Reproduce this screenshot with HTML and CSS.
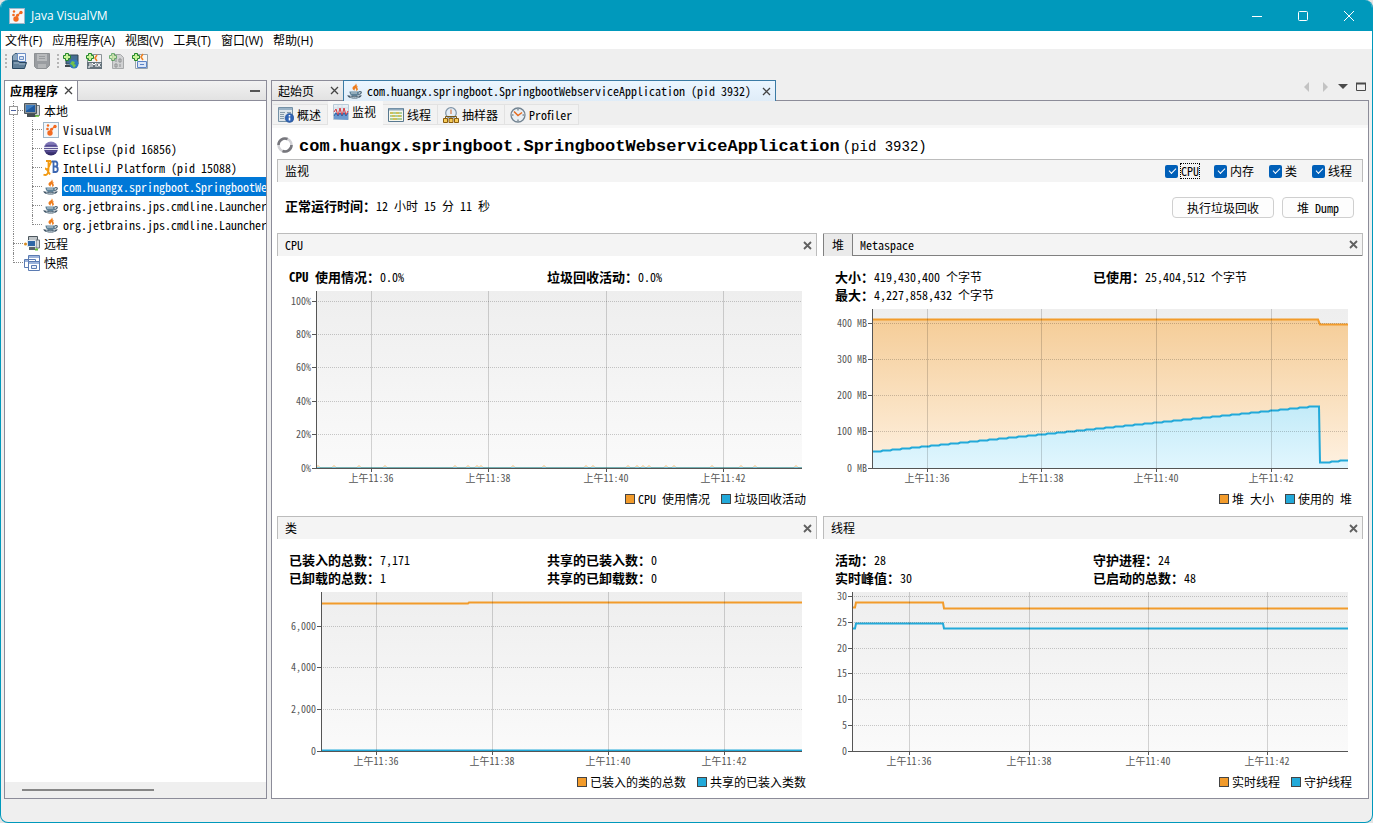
FILE: index.html
```html
<!DOCTYPE html>
<html lang="zh-CN">
<head>
    <meta charset="UTF-8">
    <meta name="viewport" content="width=device-width, initial-scale=1.0">
    <title>Java VisualVM</title>
    <link rel="stylesheet" href="styles.css">
</head>
<body>
    <!-- icon sprite -->
    <svg class="sprite" aria-hidden="true">
        <defs>
            <linearGradient id="heapOrange" x1="0" y1="0" x2="0" y2="1">
                <stop offset="0" stop-color="#f5cd98"/><stop offset="1" stop-color="#fef1e1"/>
            </linearGradient>
            <linearGradient id="heapBlue" x1="0" y1="0" x2="0" y2="1">
                <stop offset="0" stop-color="#c3ebf8"/><stop offset="1" stop-color="#e1f6fe"/>
            </linearGradient>
            <linearGradient id="sphere" x1="0" y1="0" x2="0" y2="1">
                <stop offset="0" stop-color="#8c84c4"/><stop offset="1" stop-color="#2b2261"/>
            </linearGradient>
        </defs>
        <symbol id="i-vvm" viewBox="0 0 16 16">
            <rect x=".5" y=".5" width="15" height="15" fill="#f3f7fa" stroke="#9db6c9"/>
            <path d="M8 7.500l4-3M8 8l-1 3" stroke="#f26a21" stroke-width="1.200" fill="none"/>
            <circle cx="5" cy="3.500" r="1.200" fill="#f26a21"/><circle cx="4.500" cy="7" r="1.300" fill="#f26a21"/>
            <circle cx="12" cy="4.500" r="1.700" fill="#f26a21"/><circle cx="7" cy="11" r="2.700" fill="#f26a21"/>
            <circle cx="8.500" cy="7.300" r="1.500" fill="#f26a21"/>
        </symbol>
        <symbol id="i-java" viewBox="0 0 16 16">
            <path d="M8.800 0c1 2.500-3.800 3-3.300 5.500.3 1.200 1.200 1.700 2 2.300C7.200 5.700 10 4.500 9.800 2.500 9.700 1.500 9.300.8 8.800 0zM11 2.800c-2 1-3 2.200-2 3.400.6.700.2 1.200-.2 1.800 2.200-.8 2.600-1.800 1.700-2.800-.5-.8-.2-1.500.5-2.400z" fill="#ee7d1c"/>
            <path d="M2.500 8.500h9.500c.2 2-1 4.500-2.500 4.500h-4C4 13 2.300 10.500 2.500 8.500z" fill="#5f8197"/>
            <path d="M4 10h6" stroke="#c8d7e0"/>
            <path d="M12 8.800c3.200-.8 3.200 2.200-.8 2.900" fill="none" stroke="#4b6475" stroke-width="1.200"/>
            <path d="M.5 12c3 1.500 11 1.500 14 0 .5 4.500-14.500 5-14 0z" fill="#45596a"/>
            <path d="M3 13.800c3 .8 6 .8 9 0" stroke="#b9c9d3" fill="none"/>
        </symbol>
        <symbol id="i-eclipse" viewBox="0 0 16 16">
            <circle cx="8" cy="7.500" r="7" fill="url(#sphere)"/>
            <path d="M1 6.500h14M1 8.500h14" stroke="#e3e2f1"/>
            <path d="M3 4.500h10M3 10.500h10" stroke="#554a94"/>
        </symbol>
        <symbol id="i-idea" viewBox="0 0 16 16">
            <path d="M3 1h5M5.500 1v9c0 4-2.500 6-5 4.500M2 8.500c2 0 3 3 5 6M8.500 1L4 11" fill="none" stroke="#f29a12" stroke-width="1.800"/>
            <path d="M10.500 1v11h2c3 0 3-5.500 0-5.500h-2h2C15 6.500 15 1.500 12.500 1.500H8.500" fill="none" stroke="#3c66b1" stroke-width="1.800"/>
        </symbol>
        <symbol id="i-pc" viewBox="0 0 16 16">
            <path d="M6 2.500h9.500v10H6z" fill="#cfd3d6" stroke="#6a7278"/>
            <path d="M.5.5h12v10H.5z" fill="#8a9298" stroke="#4c565d"/>
            <path d="M2 2h9v7H2z" fill="#1f5a9e"/><path d="M2 2h9L2 8z" fill="#3f7fc2"/>
            <path d="M3 11h8l1 3H3z" fill="#454e54"/><path d="M11 13h4" stroke="#63bd32" stroke-width="1.500"/>
        </symbol>
        <symbol id="i-remote" viewBox="0 0 16 16">
            <path d="M4.500.5h9v8h-9z" fill="#bfc5c9" stroke="#4c565d"/>
            <path d="M12 4h3.500v8H12z" fill="#d6dadd" stroke="#69737a"/>
            <path d="M3.500 4.500h8v6h-8z" fill="#2f67a7" stroke="#e2e6e9"/>
            <path d="M5 11h6v3H5z" fill="#59636a"/><path d="M11 13.500h3" stroke="#63bd32" stroke-width="2"/>
            <circle cx="1.500" cy="8" r="1.500" fill="#d58a1f"/>
        </symbol>
        <symbol id="i-snap" viewBox="0 0 16 16">
            <g fill="#fff" stroke="#5b7bb2"><path d="M4.500.5h11v8h-11zM.5 4.500h11v8H.5z"/><path d="M4.500 6.500h11v9h-11z"/></g>
            <path d="M5 2h10M1 6h3M5 8h10" stroke="#9db4db" stroke-width="2"/>
            <path d="M7.500 10.500h5v3h-5z" fill="#e9eef8" stroke="#5b7bb2"/>
        </symbol>
        <symbol id="i-open" viewBox="0 0 16 16">
            <path d="M1.500 3L4 .5h3V8H1.500z" fill="#8ba6bd" stroke="#415f78"/>
            <path d="M6.500.5h8v8h-8z" fill="#f5f8fc" stroke="#6d8fc4"/><path d="M8.500 3.500h4v3h-4z" fill="#d6e2f3" stroke="#6d8fc4"/>
            <path d="M1.500 15.500V8h6l1 1.500h7l-2 6z" fill="#607f98" stroke="#27455e"/><path d="M3 10h5M8 11h6" stroke="#a2b8ca"/>
        </symbol>
        <symbol id="i-save" viewBox="0 0 16 16">
            <path d="M.5.5h15v12l-3 3h-10l-2-2z" fill="#999ca0" stroke="#8d9093"/>
            <path d="M3 1h10v7H3z" fill="#b9bbbd"/><path d="M5 3.500h6M5 5.500h6" stroke="#999c9f"/><path d="M4 11h8v4H4z" fill="#b3b5b7"/>
        </symbol>
        <symbol id="i-plus" viewBox="0 0 8 8">
            <path d="M2.500.5h3v2h2v3h-2v2h-3v-2h-2v-3h2z" fill="#c9f39b" stroke="#23862a"/>
        </symbol>
        <symbol id="i-addhost" viewBox="0 0 16 16">
            <path d="M3 2h12v9H3z" fill="#456e94" stroke="#314553"/><path d="M2 13h8" stroke="#3e474d" stroke-width="2"/>
            <circle cx="11" cy="11" r="4.500" fill="#2e7abd"/><path d="M9 8l3 1-1 2 2 1-2 3-2-3-2-1z" fill="#72c14b"/>
            <use href="#i-plus" width="8" height="8"/>
        </symbol>
        <symbol id="i-addjmx" viewBox="0 0 16 16">
            <path d="M4.500 1.500h11v14h-14V6" fill="#f2f2f2" stroke="#8b9297"/>
            <path d="M11 2L9 5l2 3" stroke="#ee8122" stroke-width="1.500" fill="none"/>
            <path d="M1 9h15v7H1z" fill="#65737c"/>
            <path d="M4 10v4H2M6 14v-4l2 2 2-2v4M11.500 10l3 4M14.500 10l-3 4" stroke="#fff" fill="none"/>
            <use href="#i-plus" width="8" height="8"/>
        </symbol>
        <symbol id="i-addcore" viewBox="0 0 16 16">
            <path d="M3.500 1.500h8l3 3v11h-11z" fill="#d0d1d2" stroke="#a7a9aa"/>
            <path d="M7 6v3M10 6h2v3h-2zM6 11h2v3H6zM11 11v3" stroke="#8f9193" fill="none"/>
            <g opacity=".6"><use href="#i-plus" width="8" height="8"/></g>
        </symbol>
        <symbol id="i-addsnap" viewBox="0 0 16 16">
            <path d="M3.500 1.500h12v14h-12z" fill="#f7f7f4" stroke="#97a3ac"/>
            <path d="M11 1L9 4l2 3" stroke="#ee8122" stroke-width="1.500" fill="none"/>
            <path d="M5.500 8.500h9v6h-9z" fill="#dbe6f7" stroke="#5b83c6"/><path d="M8 11.500h4" stroke="#5b83c6"/>
            <use href="#i-plus" width="8" height="8"/>
        </symbol>
        <symbol id="i-overview" viewBox="0 0 16 16">
            <path d="M.5.5h14v14H.5z" fill="#dfe6eb" stroke="#7591a6"/><path d="M1 2h13" stroke="#9ab3c6" stroke-width="2"/>
            <path d="M2 5.500h5M2 7.500h4M2 9.500h4M2 11.500h4M9 5.500h4" stroke="#8599a8"/>
            <circle cx="11.500" cy="11" r="4.400" fill="#2f63b5" stroke="#1d4a92" stroke-width=".6"/>
            <path d="M11.500 8v1.500M11.500 10.500v3" stroke="#fff" stroke-width="1.600"/>
        </symbol>
        <symbol id="i-monitor" viewBox="0 0 16 16">
            <path d="M.5.5h15v15H.5z" fill="#e8eff5" stroke="#b9cad7"/>
            <path d="M1 4h14M1 7h14M5 1v14M9 1v14" stroke="#c2d1dd" stroke-width=".6"/>
            <path d="M1 15V10l2-2 2 4 2-4 2 4 2-5 2 4 2-2v7z" fill="#6c9bd0"/>
            <path d="M1 8l2-3 2 7 2-8 2 8 2-8 2 7 2-4" fill="none" stroke="#d9343b"/>
            <path d="M1 12l2-3 2 3 2-3 2 3 2-3 2 3 2-3" fill="none" stroke="#2d67ab"/>
        </symbol>
        <symbol id="i-threads" viewBox="0 0 16 16">
            <path d="M.5 1.500h15v13H.5z" fill="#f7f8ee" stroke="#58788f"/><path d="M1 2.500h14" stroke="#8fa9bc" stroke-width="2"/>
            <path d="M2 6h12M2 9h12M2 12h12" stroke="#63a348" stroke-width="1.200"/>
            <path d="M2 6h3M8 6h3M4 9h3M10 9h3M5 12h4" stroke="#efb41d" stroke-width="1.200"/>
        </symbol>
        <symbol id="i-sampler" viewBox="0 0 16 16">
            <circle cx="8" cy="6" r="5.300" fill="#e4edf6" stroke="#7f93a5" stroke-width="1.200"/>
            <path d="M8 2.500V7" stroke="#d86828" fill="none"/>
            <path d="M2.500 11.500V9.500h11v2M8 9v3" stroke="#77591b" fill="none"/>
            <path d="M.5 11.500h4v4h-4zM6 11.500h4v4H6zM11.500 11.500h4v4h-4z" fill="#f7cb58" stroke="#8a5d0d"/>
        </symbol>
        <symbol id="i-profiler" viewBox="0 0 16 16">
            <circle cx="8" cy="8" r="7" fill="#e9eff4" stroke="#728391" stroke-width="1.300"/>
            <path d="M8 2v1.500M8 12.500V14M2 8h1.500M12.500 8H14" stroke="#4c5d69"/>
            <path d="M4 4.500L8 8.500l4-3" stroke="#e66a1f" stroke-width="1.500" fill="none"/>
        </symbol>
        <symbol id="i-x" viewBox="0 0 9 9"><path d="M1 1l7 7M8 1L1 8" stroke="currentColor" stroke-width="1.300"/></symbol>
        <symbol id="i-xb" viewBox="0 0 9 9"><path d="M1 1l7 7M8 1L1 8" stroke="currentColor" stroke-width="1.800"/></symbol>
    </svg>

    <div class="window">
        <header class="titlebar">
            <svg class="icon"><use href="#i-vvm"/></svg>
            <span class="title">Java VisualVM</span>
            <div class="win-buttons">
                <button type="button" aria-label="最小化"><svg width="10" height="10"><path d="M0 5.500h10" stroke="#fff"/></svg></button>
                <button type="button" aria-label="最大化"><svg width="10" height="10"><rect x=".5" y=".5" width="9" height="9" rx="1" fill="none" stroke="#fff"/></svg></button>
                <button type="button" aria-label="关闭"><svg width="10" height="10"><path d="M0 0l10 10M10 0L0 10" stroke="#fff"/></svg></button>
            </div>
        </header>

        <nav class="menubar">
            <button type="button">文件(F)</button>
            <button type="button">应用程序(A)</button>
            <button type="button">视图(V)</button>
            <button type="button">工具(T)</button>
            <button type="button">窗口(W)</button>
            <button type="button">帮助(H)</button>
        </nav>

        <div class="toolbar">
            <span class="grip"></span>
            <button type="button" aria-label="打开"><svg class="icon"><use href="#i-open"/></svg></button>
            <button type="button" aria-label="保存"><svg class="icon"><use href="#i-save"/></svg></button>
            <span class="grip"></span>
            <button type="button" aria-label="添加远程主机"><svg class="icon"><use href="#i-addhost"/></svg></button>
            <button type="button" aria-label="添加 JMX 连接"><svg class="icon"><use href="#i-addjmx"/></svg></button>
            <button type="button" aria-label="添加核心 Dump"><svg class="icon"><use href="#i-addcore"/></svg></button>
            <button type="button" aria-label="添加快照"><svg class="icon"><use href="#i-addsnap"/></svg></button>
        </div>

        <div class="workspace">
            <!-- Applications tree -->
            <aside class="sidebar">
                <div class="side-head">
                    <div class="side-tab">应用程序 <button type="button" class="close" aria-label="关闭"><svg><use href="#i-x"/></svg></button></div>
                    <button type="button" class="minimize" aria-label="最小化"></button>
                </div>
                <ul class="tree">
                    <li>
                        <div class="node"><span class="toggle"></span><svg class="icon"><use href="#i-pc"/></svg><span class="name">本地</span></div>
                        <ul>
                            <li><div class="node"><svg class="icon"><use href="#i-vvm"/></svg><span class="name">VisualVM</span></div></li>
                            <li><div class="node"><svg class="icon"><use href="#i-eclipse"/></svg><span class="name">Eclipse (pid 16856)</span></div></li>
                            <li><div class="node"><svg class="icon"><use href="#i-idea"/></svg><span class="name">IntelliJ Platform (pid 15088)</span></div></li>
                            <li><div class="node selected"><svg class="icon"><use href="#i-java"/></svg><span class="name">com.huangx.springboot.SpringbootWebserviceApplication (pid 3932)</span></div></li>
                            <li><div class="node"><svg class="icon"><use href="#i-java"/></svg><span class="name">org.jetbrains.jps.cmdline.Launcher</span></div></li>
                            <li><div class="node"><svg class="icon"><use href="#i-java"/></svg><span class="name">org.jetbrains.jps.cmdline.Launcher</span></div></li>
                        </ul>
                    </li>
                    <li><div class="node"><svg class="icon"><use href="#i-remote"/></svg><span class="name">远程</span></div></li>
                    <li><div class="node"><svg class="icon"><use href="#i-snap"/></svg><span class="name">快照</span></div></li>
                </ul>
                <div class="hscroll"><div class="thumb"></div></div>
            </aside>

            <main class="editor">
                <div class="doc-tabs">
                    <div class="doc-tab first">起始页 <button type="button" class="close" aria-label="关闭"><svg><use href="#i-x"/></svg></button></div>
                    <div class="doc-tab active"><svg class="icon"><use href="#i-java"/></svg><span>com.huangx.springboot.SpringbootWebserviceApplication (pid 3932)</span> <button type="button" class="close" aria-label="关闭"><svg><use href="#i-x"/></svg></button></div>
                    <div class="tab-tools">
                        <button type="button" aria-label="向左"><svg width="10" height="10"><path d="M7 0v10L2 5z" fill="#c3c3c3"/></svg></button>
                        <button type="button" aria-label="向右"><svg width="10" height="10"><path d="M3 0v10l5-5z" fill="#c3c3c3"/></svg></button>
                        <button type="button" aria-label="列表"><svg width="10" height="10"><path d="M0 2h10L5 7z" fill="#4a4a4a"/></svg></button>
                        <button type="button" aria-label="最大化"><svg width="10" height="10"><path d="M.5 1.500h9v7h-9z" fill="none" stroke="#4a4a4a"/><path d="M0 1.500h10" stroke="#4a4a4a" stroke-width="2"/></svg></button>
                    </div>
                </div>

                <div class="document">
                    <div class="view-tabs">
                        <button type="button"><svg class="icon"><use href="#i-overview"/></svg>概述</button>
                        <button type="button" class="active"><svg class="icon"><use href="#i-monitor"/></svg>监视</button>
                        <button type="button"><svg class="icon"><use href="#i-threads"/></svg>线程</button>
                        <button type="button"><svg class="icon"><use href="#i-sampler"/></svg>抽样器</button>
                        <button type="button"><svg class="icon"><use href="#i-profiler"/></svg>Profiler</button>
                    </div>

                    <div class="view">
                        <h1>
                            <svg class="spinner" viewBox="0 0 16 16"><circle cx="8" cy="8" r="6.500" fill="none" stroke="#d2d2d6" stroke-width="2.500"/><path d="M1.500 8a6.500 6.500 0 0 1 9-6M14.500 8a6.500 6.500 0 0 1-9 6" fill="none" stroke="#77777d" stroke-width="2.500"/></svg>
                            <span class="app-name">com.huangx.springboot.SpringbootWebserviceApplication</span><span class="pid">(pid 3932)</span>
                        </h1>

                        <div class="band">
                            <span>监视</span>
                            <div class="checks">
                                <label class="focused"><input type="checkbox" checked><span>CPU</span></label>
                                <label><input type="checkbox" checked><span>内存</span></label>
                                <label><input type="checkbox" checked><span>类</span></label>
                                <label><input type="checkbox" checked><span>线程</span></label>
                            </div>
                        </div>

                        <div class="uptime">
                            <div class="uptime-text"><b>正常运行时间：</b>12 小时 15 分 11 秒</div>
                            <div class="actions">
                                <button type="button">执行垃圾回收</button>
                                <button type="button">堆 Dump</button>
                            </div>
                        </div>

                        <div class="panels">
                            <section class="panel">
                                <div class="panel-head"><span>CPU</span><button type="button" class="close" aria-label="关闭"><svg><use href="#i-xb"/></svg></button></div>
                                <div class="stats">
                                    <div><b>CPU 使用情况：</b>0.0%</div>
                                    <div><b>垃圾回收活动：</b>0.0%</div>
                                </div>
                                <div class="plot plot-cpu"><svg id="chart-cpu"></svg></div>
                                <div class="legend"><span class="key orange"></span>CPU 使用情况<span class="key blue"></span>垃圾回收活动</div>
                            </section>

                            <section class="panel">
                                <div class="panel-head tabbed"><button type="button" class="mem-tab">堆</button><button type="button" class="mem-tab other">Metaspace</button><button type="button" class="close" aria-label="关闭"><svg><use href="#i-xb"/></svg></button></div>
                                <div class="stats">
                                    <div><b>大小：</b>419,430,400 个字节</div>
                                    <div><b>已使用：</b>25,404,512 个字节</div>
                                    <div><b>最大：</b>4,227,858,432 个字节</div>
                                </div>
                                <div class="plot plot-heap"><svg id="chart-heap"></svg></div>
                                <div class="legend"><span class="key orange"></span>堆 大小<span class="key blue"></span>使用的 堆</div>
                            </section>

                            <section class="panel">
                                <div class="panel-head"><span>类</span><button type="button" class="close" aria-label="关闭"><svg><use href="#i-xb"/></svg></button></div>
                                <div class="stats">
                                    <div><b>已装入的总数：</b>7,171</div>
                                    <div><b>共享的已装入数：</b>0</div>
                                    <div><b>已卸载的总数：</b>1</div>
                                    <div><b>共享的已卸载数：</b>0</div>
                                </div>
                                <div class="plot plot-classes"><svg id="chart-classes"></svg></div>
                                <div class="legend"><span class="key orange"></span>已装入的类的总数<span class="key blue"></span>共享的已装入类数</div>
                            </section>

                            <section class="panel">
                                <div class="panel-head"><span>线程</span><button type="button" class="close" aria-label="关闭"><svg><use href="#i-xb"/></svg></button></div>
                                <div class="stats">
                                    <div><b>活动：</b>28</div>
                                    <div><b>守护进程：</b>24</div>
                                    <div><b>实时峰值：</b>30</div>
                                    <div><b>已启动的总数：</b>48</div>
                                </div>
                                <div class="plot plot-threads"><svg id="chart-threads"></svg></div>
                                <div class="legend"><span class="key orange"></span>实时线程<span class="key blue"></span>守护线程</div>
                            </section>
                        </div>
                    </div>
                </div>
            </main>
        </div>
    </div>
    <script src="charts.js"></script>
</body>
</html>
```
FILE: styles.css
```css
* {
    box-sizing: border-box;
}
body {
    margin: 0;
    background-color: #e4e4e4;
    color: #000;
    font-family: "Noto Sans CJK SC", sans-serif;
    font-size: 12px;
    line-height: 18px;
    font-feature-settings: "hwid";
}
button {
    margin: 0;
    padding: 0;
    border: none;
    background: none;
    color: inherit;
    font: inherit;
    font-feature-settings: inherit;
}
.sprite {
    position: absolute;
    width: 0;
    height: 0;
}
.icon {
    width: 16px;
    height: 16px;
    flex: none;
}
.close {
    display: flex;
    color: #444;
}
.close svg {
    width: 9px;
    height: 9px;
}

/* Window frame */
.window {
    display: flex;
    flex-direction: column;
    height: 100vh;
    min-height: 600px;
    border: 1px solid #0099bc;
    border-top: none;
    border-radius: 8px;
    overflow: hidden;
    background-color: #efefef;
}
.titlebar {
    display: flex;
    align-items: center;
    flex: none;
    height: 31px;
    padding-left: 8px;
    background-color: #0099bc;
    color: #fff;
}
.title {
    margin-left: 6px;
    font-family: "Open Sans", sans-serif;
    font-feature-settings: normal;
}
.win-buttons {
    display: flex;
    margin-left: auto;
}
.win-buttons button {
    display: flex;
    align-items: center;
    justify-content: center;
    width: 46px;
    height: 31px;
}
.menubar {
    display: flex;
    flex: none;
    gap: 10px;
    height: 18px;
    padding: 1px 0 0 4px;
    background-color: #fff;
    font-family: "Open Sans", "Noto Sans CJK SC", sans-serif;
    font-feature-settings: normal;
}
.toolbar {
    display: flex;
    flex: none;
    align-items: center;
    height: 31px;
    padding: 0 0 7px 4px;
    gap: 7px;
}
.toolbar button {
    display: flex;
}
.grip {
    width: 2px;
    height: 14px;
    margin-right: -3px;
    background: repeating-linear-gradient(#b5b5b5 0 2px, transparent 2px 4px);
}

/* Left side */
.workspace {
    display: flex;
    flex: 1;
    min-height: 0;
    gap: 4px;
    padding: 0 3px 23px;
}
.sidebar {
    display: flex;
    flex-direction: column;
    flex: none;
    width: 263px;
    border: 1px solid #8c8c99;
    background-color: #fff;
}
.side-head {
    display: flex;
    align-items: center;
    justify-content: space-between;
    height: 20px;
    border-bottom: 1px solid #8c8c99;
    background: linear-gradient(#f2f2f2, #e2e2e2);
}
.side-tab {
    display: flex;
    align-items: center;
    gap: 6px;
    height: 20px;
    padding: 0 4px 0 5px;
    border-right: 1px solid #8c8c99;
    background-color: #fff;
    font-weight: bold;
}
.minimize {
    width: 10px;
    height: 2px;
    margin-right: 6px;
    background-color: #555;
}
.tree {
    flex: 1;
    overflow: hidden;
}
.tree,
.tree ul {
    margin: 0;
    padding: 0;
    list-style: none;
}
.tree ul {
    padding-left: 19px;
}
.tree li {
    position: relative;
}
.node {
    display: flex;
    align-items: center;
    gap: 3px;
    height: 19px;
    padding-left: 19px;
    white-space: nowrap;
}
.name {
    flex: 1;
    height: 19px;
    padding-left: 1px;
    line-height: 20px;
}
.selected .name {
    background-color: #0078d7;
    color: #fff;
}
/* dotted guides of the tree */
.tree li::before,
.tree li::after {
    content: "";
    position: absolute;
    left: 8px;
}
.tree li::before {
    top: 9px;
    width: 10px;
    border-top: 1px dotted #888;
}
.tree li::after {
    top: 0;
    height: 100%;
    border-left: 1px dotted #888;
}
.tree li:last-child::after {
    height: 10px;
}
.toggle {
    position: absolute;
    left: 4px;
    top: 5px;
    z-index: 1;
    width: 9px;
    height: 9px;
    border: 1px solid #999;
    background: linear-gradient(#4a5f9f, #4a5f9f) center / 5px 1px no-repeat #fff;
}
.hscroll {
    height: 16px;
    padding: 7px 17px;
    background-color: #efefef;
}
.thumb {
    width: 58%;
    height: 2px;
    background-color: #868686;
}

/* Documents */
.editor {
    display: flex;
    flex-direction: column;
    flex: 1;
    min-width: 0;
}
.doc-tabs {
    display: flex;
    flex: none;
    height: 21px;
    position: relative;
}
.doc-tab {
    display: flex;
    align-items: center;
    justify-content: space-between;
    height: 20px;
    padding: 0 4px 0 6px;
    border: 1px solid #8c8c99;
    border-bottom: none;
    background: linear-gradient(#f2f2f2, #e2e2e2);
}
.doc-tab.first {
    width: 72px;
    border-right: none;
}
.doc-tab.active {
    gap: 4px;
    height: 21px;
    padding: 0 4px 0 3px;
    border-color: #3b7ba5;
    background: linear-gradient(#ecf6ff, #dfecf8);
}
.active .close {
    margin-left: 7px;
}
.tab-tools {
    display: flex;
    align-items: center;
    gap: 8px;
    margin: 0 3px 8px auto;
}
.tab-tools button {
    display: flex;
}
.document {
    display: flex;
    flex-direction: column;
    flex: 1;
    min-height: 0;
    margin-top: -1px;
    border: 1px solid #8c8c99;
    background-color: #fff;
}
.view-tabs {
    display: flex;
    flex: none;
    align-items: flex-end;
    height: 27px;
    padding-left: 1px;
    border-bottom: 3px solid #f8f8f8;
    background-color: #efefef;
}
.view-tabs button {
    display: flex;
    align-items: center;
    gap: 3px;
    height: 21px;
    padding: 0 6px 0 5px;
    border: 1px solid #e2e2e2;
    border-left: none;
    background-color: #f2f2f2;
}
.view-tabs .active {
    height: 24px;
    padding: 0 6px 2px 5px;
    border-color: #f8f8f8;
    background-color: #f8f8f8;
}
.view {
    display: flex;
    flex-direction: column;
    flex: 1;
    min-height: 0;
    padding: 0 5px;
}
h1 {
    display: flex;
    align-items: center;
    flex: none;
    height: 31px;
    margin: 0;
    padding-top: 6px;
    font-family: "Liberation Mono", monospace;
    font-size: 17px;
    font-weight: normal;
}
.spinner {
    width: 16px;
    height: 16px;
    margin: 0 6px 4px 0;
}
.app-name {
    font-weight: bold;
}
.pid {
    margin-left: 3px;
    font-size: 14px;
}
.band {
    display: flex;
    align-items: center;
    justify-content: space-between;
    flex: none;
    height: 23px;
    padding: 0 10px 0 7px;
    border: 1px solid #bcbcbc;
    border-bottom: none;
    background-color: #f4f4f4;
}
.checks {
    display: flex;
    gap: 15px;
}
.checks label {
    display: flex;
    align-items: center;
    gap: 3px;
}
.checks input {
    position: relative;
    appearance: none;
    width: 13px;
    height: 13px;
    margin: 0;
    border-radius: 2px;
    background-color: #005fb8;
}
.checks input:checked::after {
    content: "";
    position: absolute;
    left: 4px;
    top: 3px;
    width: 6px;
    height: 3px;
    border: solid #fff;
    border-width: 0 0 1px 1px;
    transform: rotate(-45deg);
}
.checks span {
    line-height: 14px;
}
.focused span {
    outline: 1px dotted #000;
}
.uptime {
    display: flex;
    align-items: center;
    justify-content: space-between;
    flex: none;
    height: 51px;
    padding: 0 9px 0 8px;
}
.uptime-text {
    padding-bottom: 4px;
}
b {
    font-size: 13px;
}
.actions {
    display: flex;
    gap: 8px;
}
.actions button {
    height: 21px;
    padding: 0 14px;
    border: 1px solid #cfcfcf;
    border-radius: 4px;
    background-color: #fdfdfd;
}

/* Chart panels */
.panels {
    display: grid;
    grid-template-columns: 1fr 1fr;
    grid-template-rows: 1fr 1fr;
    gap: 1px 6px;
    flex: 1;
    min-height: 0;
}
.panel {
    display: flex;
    flex-direction: column;
    min-width: 0;
    min-height: 0;
}
.panel-head {
    display: flex;
    align-items: center;
    flex: none;
    height: 23px;
    padding: 0 4px 0 7px;
    border: 1px solid #bcbcbc;
    border-bottom: none;
    background-color: #f4f4f4;
}
.panel-head .close {
    margin-left: auto;
    color: #606060;
}
.tabbed {
    padding-left: 0;
    border-left: none;
}
.mem-tab {
    align-self: stretch;
    width: 30px;
    border: 1px solid #808080;
    border-width: 0 1px;
    background-color: #eaeaea;
}
.mem-tab.other {
    flex: 1;
    width: auto;
    padding-left: 7px;
    border-width: 0 0 1px;
    background: none;
    text-align: left;
}
.tabbed .close {
    align-self: stretch;
    align-items: center;
    margin-right: -4px;
    padding-right: 4px;
    border-bottom: 1px solid #808080;
}
.stats {
    display: grid;
    grid-template-columns: 1fr 1fr;
    flex: none;
    padding: 12px 12px 5px;
}
.stats div {
    height: 18px;
    white-space: nowrap;
}
.plot {
    flex: 1;
    min-height: 0;
    margin: 0 15px 21px 39px;
    background: linear-gradient(#eeeeee, #fafafa);
}
.plot-heap {
    margin-left: 49px;
}
.plot-classes {
    margin-left: 44px;
}
.plot-threads {
    margin-left: 29px;
}
.plot > svg {
    display: block;
    width: 100%;
    height: 100%;
    overflow: visible;
}
.plot text {
    fill: #555;
    font-size: 10px;
}
.grid {
    stroke: #000;
    stroke-opacity: 0.16;
    shape-rendering: crispEdges;
}
.grid.dotted {
    stroke-dasharray: 1 1;
    stroke-opacity: 0.2;
}
.axis {
    stroke: #555;
    shape-rendering: crispEdges;
}
.line {
    fill: none;
    stroke-width: 2;
    vector-effect: non-scaling-stroke;
}
.line.orange {
    stroke: #f29b2b;
}
.line.blue {
    stroke: #22a9d9;
}
.line.faint {
    stroke-width: 1;
    stroke-opacity: 0.6;
}
.legend {
    display: flex;
    align-items: center;
    justify-content: flex-end;
    flex: none;
    height: 26px;
    padding: 0 11px 7px;
}
.key {
    width: 10px;
    height: 10px;
    margin: 0 3px 0 11px;
    border: 1px solid #444;
}
.key.orange {
    background-color: #f29b2b;
}
.key.blue {
    background-color: #22a9d9;
}
```
FILE: charts.js
```js
const NS = 'http://www.w3.org/2000/svg';

function add(parent, tag, attrs, text) {
    const el = document.createElementNS(NS, tag);
    for (const name in attrs) el.setAttribute(name, attrs[name]);
    if (text) el.textContent = text;
    parent.appendChild(el);
    return el;
}

// staircase of one unit steps between two points
function steps(x0, y0, x1, y1) {
    const n = Math.abs(Math.round(y1 - y0));
    const points = [[x0, y0]];
    for (let i = 1; i <= n; i++) {
        const x = x0 + (x1 - x0) * i / (n + 1);
        const y = y0 + (y1 - y0) * i / n;
        points.push([x - 1, y0 + (y1 - y0) * (i - 1) / n], [x + 1, y]);
    }
    points.push([x1, y1]);
    return points;
}

function spikes(xs, base) {
    let points = [[0, base]];
    xs.forEach(x => points.push([x - 2, base], [x, base - 2], [x + 2, base]));
    points.push([486, base]);
    return points;
}

const times = ['上午11:36', '上午11:38', '上午11:40', '上午11:42'];
const used = [...steps(0, 142.5, 446, 97.5), [447, 97.5], [448, 153.5], ...steps(450, 153.5, 476, 151.5)];
const size = [[0, 10.5], [446, 10.5], [448, 15.5], [476, 15.5]];

const charts = {
    cpu: {
        w: 486, h: 177, x: [55, 172, 290, 407],
        y: [[10, '100%'], [43, '80%'], [76, '60%'], [110, '40%'], [143, '20%'], [177, '0%']],
        lines: [
            { cls: 'orange faint', pts: spikes([2, 18, 43, 69, 139, 152, 161, 165, 197, 228, 270, 277, 312, 321, 327, 333, 350, 358, 396, 425, 439, 480], 176.5) },
            { cls: 'blue faint', pts: [[0, 176.5], [486, 176.5]] }
        ]
    },
    heap: {
        w: 476, h: 159, x: [55, 169, 284, 399],
        y: [[14, '400 MB'], [50, '300 MB'], [86, '200 MB'], [122, '100 MB'], [159, '0 MB']],
        lines: [
            { cls: 'orange', pts: size, fill: 'url(#heapOrange)' },
            { cls: 'blue', pts: used, fill: 'url(#heapBlue)' }
        ]
    },
    classes: {
        w: 481, h: 159, x: [55, 171, 287, 403],
        y: [[34, '6,000'], [75, '4,000'], [117, '2,000'], [159, '0']],
        lines: [
            { cls: 'orange', pts: [[0, 11.5], [147, 11.5], [148, 10.5], [481, 10.5]] },
            { cls: 'blue', pts: [[0, 158.5], [481, 158.5]] }
        ]
    },
    threads: {
        w: 496, h: 159, x: [57, 177, 296, 415],
        y: [[4, '30'], [30, '25'], [56, '20'], [81, '15'], [107, '10'], [133, '5'], [159, '0']],
        lines: [
            { cls: 'orange', pts: [[0, 15.5], [3, 15.5], [4, 10.5], [91, 10.5], [92, 16.5], [496, 16.5]] },
            { cls: 'blue', pts: [[0, 36.5], [3, 36.5], [4, 31.5], [91, 31.5], [92, 36.5], [496, 36.5]] }
        ]
    }
};

for (const name in charts) {
    const c = charts[name];
    const svg = document.getElementById('chart-' + name);

    const data = add(svg, 'svg', { width: '100%', height: '100%', viewBox: `0 0 ${c.w} ${c.h}`, preserveAspectRatio: 'none' });
    c.lines.forEach(line => {
        const points = line.pts.map(p => p.join()).join(' ');
        if (line.fill) add(data, 'polygon', { points: `${points} ${c.w},${c.h} 0,${c.h}`, fill: line.fill });
    });

    c.y.forEach(([pos, label]) => {
        const y = pos / c.h * 100 + '%';
        add(svg, 'line', { class: 'grid dotted', x1: 0, x2: '100%', y1: y, y2: y });
        add(svg, 'line', { class: 'axis', x1: -4, x2: 0, y1: y, y2: y });
        add(svg, 'text', { x: -5, y: y, dy: 4, 'text-anchor': 'end' }, label);
    });
    c.x.forEach((pos, i) => {
        const x = pos / c.w * 100 + '%';
        add(svg, 'line', { class: 'grid', x1: x, x2: x, y1: 0, y2: '100%' });
        const tick = add(svg, 'svg', { x: x, y: '100%', overflow: 'visible' });
        add(tick, 'line', { class: 'axis', x1: 0, x2: 0, y1: 0, y2: 4 });
        add(tick, 'text', { x: 0, y: 14, 'text-anchor': 'middle' }, times[i]);
    });

    c.lines.forEach(line => {
        add(data, 'polyline', { class: 'line ' + line.cls, points: line.pts.map(p => p.join()).join(' ') });
    });
    add(svg, 'line', { class: 'axis', x1: 0, x2: 0, y1: 0, y2: '100%' });
    add(svg, 'line', { class: 'axis', x1: 0, x2: '100%', y1: '100%', y2: '100%' });
}
```
